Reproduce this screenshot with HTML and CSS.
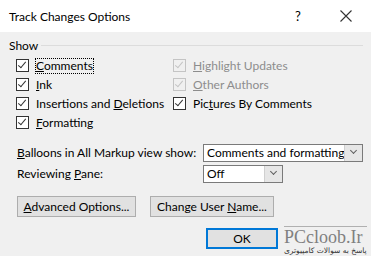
FILE: index.html
```html
<!DOCTYPE html>
<html lang="en">
  <head>
    <meta charset="UTF-8" />
    <title>Track Changes Options</title>
    <link rel="stylesheet" href="styles.css">
  </head>
  <body>
    <div class="dialog">
      <div class="titlebar">
        <span class="title">Track Changes Options</span>
        <span class="help">?</span>
        <span class="close">
          <svg width="12" height="12" viewBox="0 0 12 12"><path d="M0.5 0.5 L11.5 11.5 M11.5 0.5 L0.5 11.5" stroke="#333" stroke-width="1.1" fill="none"/></svg>
        </span>
      </div>
      <div class="body">
        <div class="group-head"><span>Show</span><div class="rule"></div></div>
        <div class="show-grid">
          <div class="col">
            <label class="check"><span class="box on"></span><span class="focus"><u>C</u>omments</span></label>
            <label class="check"><span class="box on"></span><span><u>I</u>nk</span></label>
            <label class="check"><span class="box on"></span><span>Insertions and <u>D</u>eletions</span></label>
            <label class="check"><span class="box on"></span><span><u>F</u>ormatting</span></label>
          </div>
          <div class="col">
            <label class="check off"><span class="box on"></span><span><u>H</u>ighlight Updates</span></label>
            <label class="check off"><span class="box on"></span><span><u>O</u>ther Authors</span></label>
            <label class="check"><span class="box on"></span><span>Pic<u>t</u>ures By Comments</span></label>
          </div>
        </div>
        <div class="field first">
          <span class="field-label"><u>B</u>alloons in All Markup view show:</span>
          <div class="select wide"><span class="value">Comments and formatting</span><span class="arrow"></span></div>
        </div>
        <div class="field">
          <span class="field-label">Reviewing <u>P</u>ane:</span>
          <div class="select narrow"><span class="value">Off</span><span class="arrow"></span></div>
        </div>
        <div class="buttons">
          <span class="btn adv"><span><u>A</u>dvanced Options...</span></span>
          <span class="btn user"><span>Change User <u>N</u>ame...</span></span>
        </div>
        <div class="footer">
          <span class="btn ok">OK</span>
          <div class="mark">
            <span class="mark-name">PCcloob.Ir</span>
            <span class="mark-sub" lang="fa" dir="rtl">پاسخ به سوالات کامپیوتری</span>
          </div>
        </div>
      </div>
    </div>
  </body>
</html>
```

FILE: styles.css
```css
body {
  margin: 0;
  font-family: Lato, "Liberation Sans", sans-serif;
  font-size: 12px;
  color: #000;
}

.dialog {
  width: 371px;
  height: 256px;
  background-color: #f0f0f0;
  overflow: hidden;
  white-space: nowrap;
}

.titlebar {
  height: 32px;
  background-color: #fff;
  display: flex;
  align-items: center;
  padding-left: 9px;
}

.title {
  flex: 1;
  font-size: 12px;
  color: #000;
}

.help {
  width: 16px;
  margin-right: 29px;
  font-size: 13px;
}

.close {
  width: 12px;
  margin-right: 19px;
  display: flex;
}

.body {
  padding: 5px 8px 0 9px;
}

.group-head {
  display: flex;
  align-items: center;
  height: 16px;
}

.rule {
  flex: 1;
  height: 1px;
  background-color: #dcdcdc;
  margin-left: 3px;
  margin-top: 1px;
}

.show-grid {
  display: flex;
  padding-left: 7px;
  margin-top: 3px;
}

.col {
  display: flex;
  flex-direction: column;
}

.col:first-child {
  width: 157px;
}

.check {
  display: flex;
  align-items: center;
  height: 19px;
}

.box {
  width: 11px;
  height: 11px;
  border: 1px solid #333;
  background-color: #fff;
  margin-right: 7px;
  position: relative;
  flex: none;
}

.box.on::after {
  content: "";
  position: absolute;
  left: 3px;
  top: 0px;
  width: 3px;
  height: 7px;
  border-right: 1px solid #333;
  border-bottom: 1px solid #333;
  transform: rotate(40deg);
}

.check.off {
  color: #8d8d8d;
}

.check.off .box {
  border-color: #c4c4c4;
  background-color: #f0f0f0;
}

.check.off .box.on::after {
  border-color: #c4c4c4;
}

.focus {
  outline: 1px dotted #000;
  line-height: 14px;
}

.field {
  display: flex;
  align-items: center;
  padding-left: 8px;
  height: 21px;
}

.field.first {
  margin-top: 10px;
}

.field-label {
  width: 186px;
}

.select {
  display: flex;
  height: 18px;
  border: 1px solid #7a7a7a;
  background-color: #fff;
  box-sizing: border-box;
}

.select.wide {
  width: 160px;
}

.select.narrow {
  width: 80px;
}

.select .value {
  flex: 1;
  padding-left: 3px;
  line-height: 16px;
  overflow: hidden;
}

.select .arrow {
  width: 17px;
  background-color: #e6e6e6;
  border-left: 1px solid #d0d0d0;
  position: relative;
  flex: none;
}

.select .arrow::after {
  content: "";
  position: absolute;
  left: 6px;
  top: 3px;
  width: 4px;
  height: 4px;
  border-right: 1px solid #606060;
  border-bottom: 1px solid #606060;
  transform: rotate(45deg);
}

.buttons {
  display: flex;
  gap: 14px;
  padding-left: 8px;
  margin-top: 12px;
}

.btn {
  height: 21px;
  border: 1px solid #adadad;
  background-color: #e1e1e1;
  box-sizing: border-box;
  display: flex;
  align-items: center;
  justify-content: center;
}

.btn.adv {
  width: 119px;
}

.btn.user {
  width: 124px;
}

.footer {
  display: flex;
  margin-top: 11px;
  padding-left: 197px;
}

.btn.ok {
  width: 72px;
  height: 21px;
  border: 2px solid #0078d7;
  flex: none;
}

.mark {
  display: flex;
  flex-direction: column;
  margin-left: 6px;
  margin-top: -2px;
}

.mark-name {
  font-family: "Liberation Serif", serif;
  font-size: 18px;
  color: #808080;
  line-height: 18px;
  padding-top: 1px;
  border-top: 1px solid #b0b0b0;
}

.mark-sub {
  font-family: "DejaVu Sans", sans-serif;
  font-size: 7.5px;
  color: #333;
  line-height: 10px;
  text-align: right;
}
```
